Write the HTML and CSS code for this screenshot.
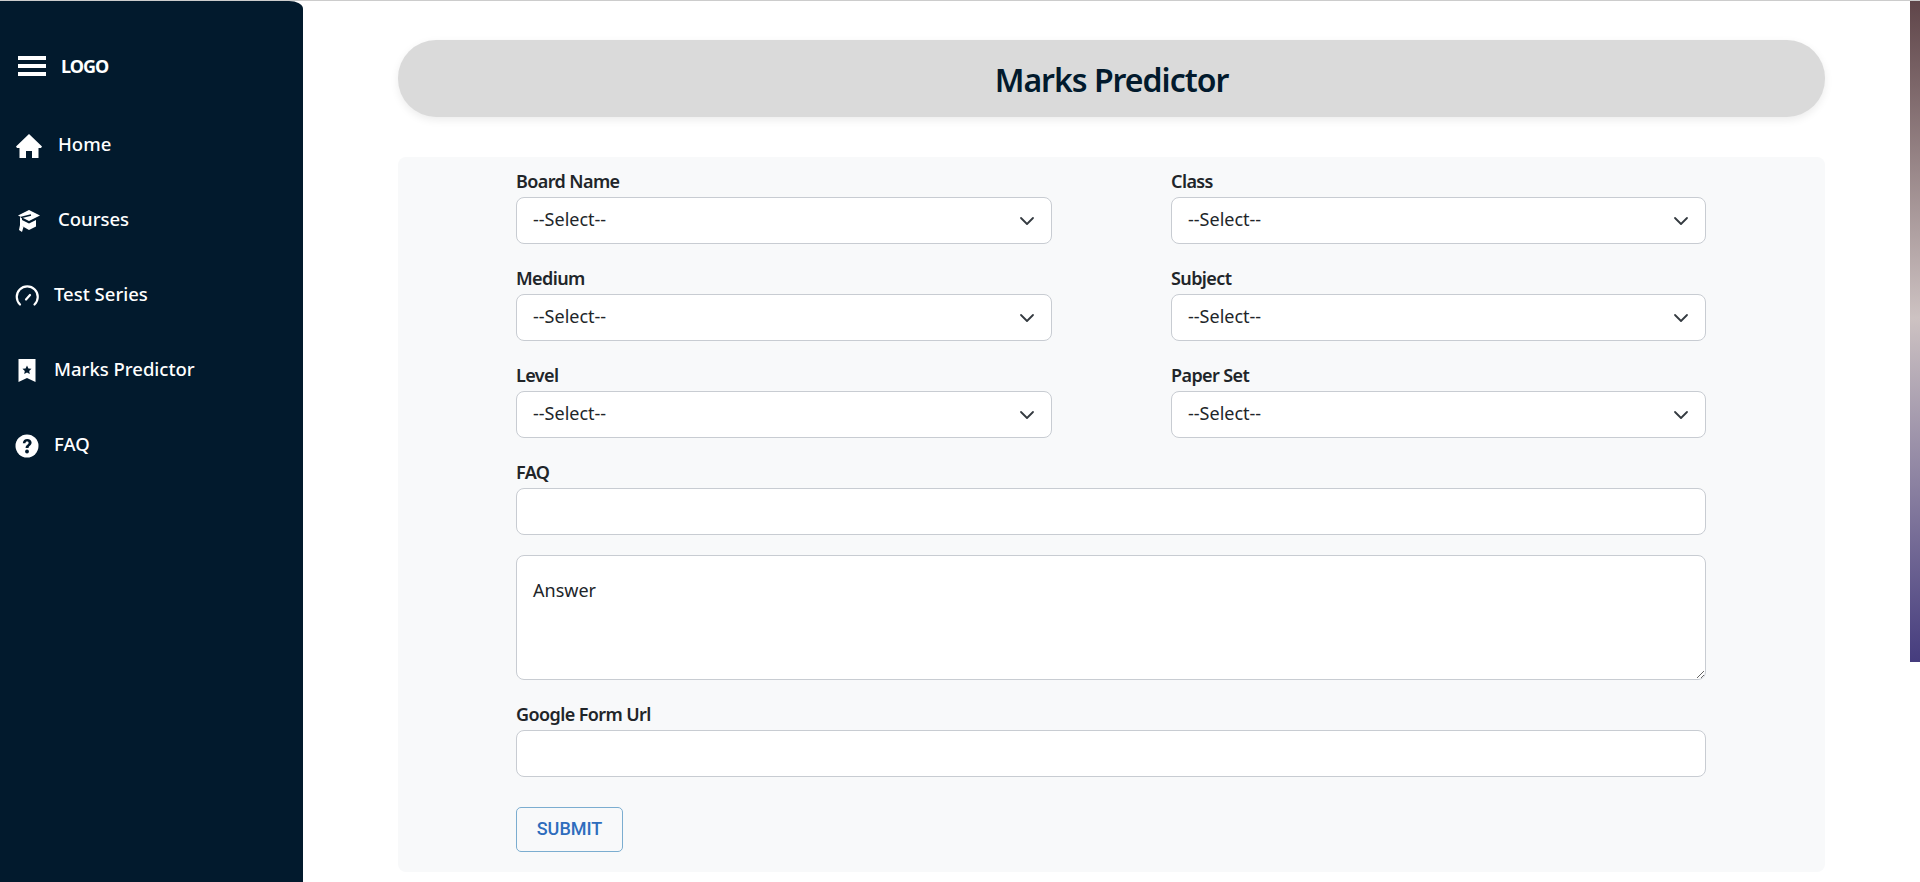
FILE: index.html
```html
<!DOCTYPE html><html><head><meta charset="utf-8">
<title>Marks Predictor</title>
<link rel="stylesheet" href="styles.css">
</head>
<body>
<div class="app">
	<div class="side">
		<div class="logo">
			<svg class="burger" width="28" height="20" viewBox="0 0 28 20"><path d="M0 0h28v4H0zM0 8h28v4H0zM0 16h28v4H0z" fill="#fff"/></svg>
			<span>LOGO</span>
		</div>
		<a class="nav home">
			<svg width="26" height="24" viewBox="0 0 26 24"><path d="M13 0L0 12.500l1 1.500h2.500v10h6.500v-7h6v7h6.500V14H25l1-1.500z" fill="#fff"/></svg>
			<span>Home</span>
		</a>
		<a class="nav home">
			<svg width="26" height="24" viewBox="-2 -1 26 24"><path d="M11 0L22 5.500 11 11 0 5.500z" fill="#fff"/><path d="M4 10v6l7 4 7-3.500V10l-7 3.500z" fill="#fff"/><path d="M2 7v8l-1 5 3 2 1.500-5L4 15.500V8z" fill="#fff"/><path d="M3 7.500L13 5" fill="none" stroke="#021a2d" stroke-width="1.300"/></svg>
			<span>Courses</span>
		</a>
		<a class="nav">
			<svg width="24" height="24" viewBox="0 0 24 24" fill="none" stroke="#fff" stroke-width="2.200" stroke-linecap="round"><path d="M5 20.500A10.500 10.500 0 1 1 19.500 20.500M11 15.500l4-4.500"/></svg>
			<span>Test Series</span>
		</a>
		<a class="nav">
			<svg width="24" height="24" viewBox="0 0 24 24"><path d="M3.500 0h17v23L12 19l-8.500 4z" fill="#fff"/><path d="M12 6.500l1.400 2.900 3.100.4-2.300 2.100.6 3.100-2.800-1.500-2.800 1.500.6-3.100-2.300-2.100 3.100-.4z" fill="#021a2d"/></svg>
			<span>Marks Predictor</span>
		</a>
		<a class="nav">
			<svg width="24" height="24" viewBox="0 0 24 24"><circle cx="12" cy="12" r="11.500" fill="#fff"/><path d="M7.800 9.200C8 6.600 9.800 5 12.200 5c2.600 0 4.400 1.500 4.400 3.600 0 3-3 3-3 5.400h-3c0-3.400 3-3.500 3-5.100 0-.8-.6-1.300-1.500-1.300-1 0-1.500.6-1.700 1.700z" fill="#021a2d"/><circle cx="12" cy="17.500" r="1.900" fill="#021a2d"/></svg>
			<span>FAQ</span>
		</a>
	</div>

	<div class="main">
		<div class="title"><h1>Marks Predictor</h1></div>
		<form class="panel">
			<div class="grid">
				<div class="field"><label>Board Name</label><div class="box sel"><span>--Select--</span><svg viewBox="0 0 16 16"><path d="M2 5l6 6 6-6" fill="none" stroke="#343a40" stroke-width="1.800" stroke-linecap="round" stroke-linejoin="round"/></svg></div></div>
				<div class="field"><label>Class</label><div class="box sel"><span>--Select--</span><svg viewBox="0 0 16 16"><path d="M2 5l6 6 6-6" fill="none" stroke="#343a40" stroke-width="1.800" stroke-linecap="round" stroke-linejoin="round"/></svg></div></div>
				<div class="field"><label>Medium</label><div class="box sel"><span>--Select--</span><svg viewBox="0 0 16 16"><path d="M2 5l6 6 6-6" fill="none" stroke="#343a40" stroke-width="1.800" stroke-linecap="round" stroke-linejoin="round"/></svg></div></div>
				<div class="field"><label>Subject</label><div class="box sel"><span>--Select--</span><svg viewBox="0 0 16 16"><path d="M2 5l6 6 6-6" fill="none" stroke="#343a40" stroke-width="1.800" stroke-linecap="round" stroke-linejoin="round"/></svg></div></div>
				<div class="field"><label>Level</label><div class="box sel"><span>--Select--</span><svg viewBox="0 0 16 16"><path d="M2 5l6 6 6-6" fill="none" stroke="#343a40" stroke-width="1.800" stroke-linecap="round" stroke-linejoin="round"/></svg></div></div>
				<div class="field"><label>Paper Set</label><div class="box sel"><span>--Select--</span><svg viewBox="0 0 16 16"><path d="M2 5l6 6 6-6" fill="none" stroke="#343a40" stroke-width="1.800" stroke-linecap="round" stroke-linejoin="round"/></svg></div></div>
				<div class="field wide"><label>FAQ</label><div class="box"></div></div>
				<div class="wide answer-wrap"><textarea class="box answer" placeholder="Answer"></textarea></div>
				<div class="field wide"><label>Google Form Url</label><div class="box"></div></div>
			</div>
			<button type="button" class="submit">SUBMIT</button>
		</form>
	</div>
	<div class="strip"></div>
</div>
</body>
</html>
```

FILE: styles.css
```css
html, body {
	margin: 0;
	height: 100%;
	overflow: hidden;
	background: #fff;
}
.app {
	display: flex;
	height: 881px;
	border-top: 1px solid #ccc;
	font-family: "Noto Sans", sans-serif;
}
.side {
	width: 303px;
	flex: none;
	background: #021a2d;
	border-top-right-radius: 14px 8px;
	color: #fff;
	box-sizing: border-box;
	padding-top: 55px;
}
.logo {
	display: flex;
	align-items: center;
	gap: 15px;
	padding-left: 18px;
	height: 20px;
	margin-bottom: 58px;
	font-size: 18px;
	font-weight: 700;
	letter-spacing: -1px;
}
.nav {
	display: flex;
	align-items: center;
	gap: 15px;
	height: 24px;
	padding-left: 15px;
	margin-bottom: 51px;
	font-size: 18.500px;
	font-weight: 500;
}
.nav svg {
	flex: none;
}
.nav span {
	padding-bottom: 5px;
}
.nav.home {
	padding-left: 16px;
	gap: 16px;
}
.main {
	flex: 1;
	padding: 39px 95px 0 95px;
}
.title {
	background: #dadada;
	height: 77px;
	border-radius: 38px;
	box-shadow: 0 3px 8px rgba(0, 0, 0, .08);
	display: flex;
	align-items: center;
	justify-content: center;
}
.title h1 {
	margin: 0;
	padding-top: 1px;
	font-size: 32px;
	font-weight: 600;
	letter-spacing: -1px;
	color: #021a2d;
}
.panel {
	margin-top: 40px;
	height: 715px;
	box-sizing: border-box;
	padding: 13px 119px 0 118px;
	background: #f8f9fa;
	border-radius: 8px;
}
.grid {
	display: grid;
	grid-template-columns: 536px 535px;
	column-gap: 119px;
	row-gap: 23px;
}
.wide {
	grid-column: 1 / 3;
}
.answer-wrap {
	margin-top: -3px;
}
.field label {
	display: block;
	height: 27px;
	line-height: 22px;
	font-size: 18px;
	font-weight: 600;
	letter-spacing: -.6px;
	color: #212529;
}
.box {
	display: block;
	width: 100%;
	height: 47px;
	box-sizing: border-box;
	background: #fff;
	border: 1px solid #c8ccd2;
	border-radius: 8px;
}
.sel {
	display: flex;
	align-items: center;
	justify-content: space-between;
	padding: 0 16px;
	font-size: 18px;
	color: #212529;
}
.sel span {
	padding-bottom: 4px;
}
.sel svg {
	width: 16px;
	height: 16px;
}
.answer {
	height: 125px;
	padding: 22px 16px;
	font: 18px "Noto Sans", sans-serif;
	resize: vertical;
}
.answer::placeholder {
	color: #212529;
	opacity: 1;
}
.submit {
	display: block;
	margin-top: 30px;
	width: 107px;
	height: 45px;
	padding-bottom: 3px;
	background: transparent;
	border: 1px solid #7badd0;
	border-radius: 5px;
	font: 500 18px Roboto, sans-serif;
	color: #2e6dbd;
}
.strip {
	position: absolute;
	top: 1px;
	right: 0;
	width: 10px;
	height: 661px;
	background: linear-gradient(#5f4549, #cdc2c2 48%, #453c7e);
}
```
